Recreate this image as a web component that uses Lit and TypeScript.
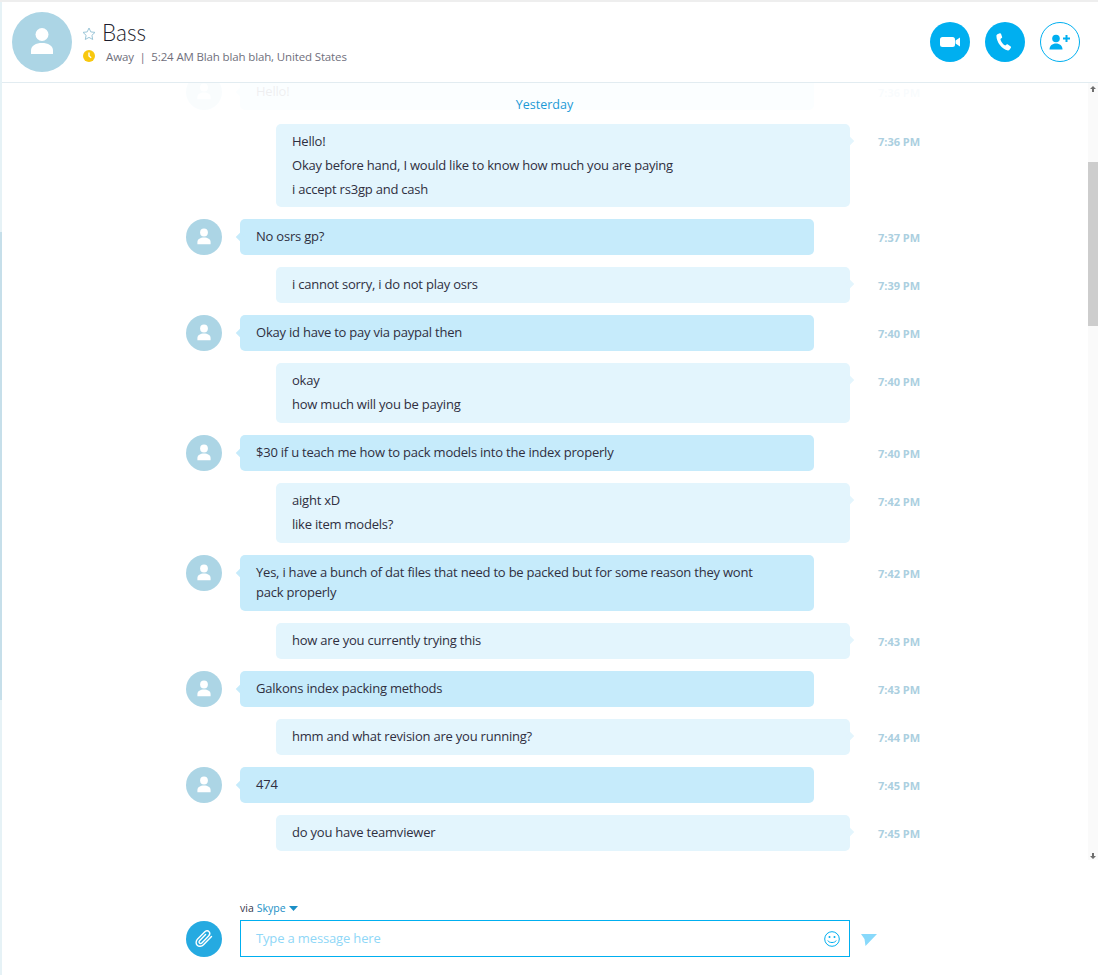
import { LitElement, html, css, svg } from "lit";
import { customElement } from "lit/decorators.js";

type Msg = { me: boolean; lines: string[]; time: string; cls?: string };

const MSGS: Msg[] = [
  { me: false, lines: ["Hello!"], time: "7:36 PM", cls: "faded" },
  { me: true, lines: ["Hello!", "Okay before hand, I would like to know how much you are paying", "i accept rs3gp and cash"], time: "7:36 PM", cls: "trim" },
  { me: false, lines: ["No osrs gp?"], time: "7:37 PM" },
  { me: true, lines: ["i cannot sorry, i do not play osrs"], time: "7:39 PM" },
  { me: false, lines: ["Okay id have to pay via paypal then"], time: "7:40 PM" },
  { me: true, lines: ["okay", "how much will you be paying"], time: "7:40 PM" },
  { me: false, lines: ["$30 if u teach me how to pack models into the index properly"], time: "7:40 PM" },
  { me: true, lines: ["aight xD", "like item models?"], time: "7:42 PM" },
  { me: false, lines: ["Yes, i have a bunch of dat files that need to be packed but for some reason they wont pack properly"], time: "7:42 PM", cls: "wrap" },
  { me: true, lines: ["how are you currently trying this"], time: "7:43 PM" },
  { me: false, lines: ["Galkons index packing methods"], time: "7:43 PM" },
  { me: true, lines: ["hmm and what revision are you running?"], time: "7:44 PM" },
  { me: false, lines: ["474"], time: "7:45 PM" },
  { me: true, lines: ["do you have teamviewer"], time: "7:45 PM" },
];

const person = svg`<circle cx="30" cy="22.5" r="6.5" fill="#fff"/><path d="M19 41.5v-3.2c0-4.6 5-7.3 11-7.3s11 2.7 11 7.3v3.2q0 .5-.5.5h-21q-.5 0-.5-.5z" fill="#fff"/>`;

@customElement("app-root")
export class AppRoot extends LitElement {
  static styles = css`
    :host {
      display: flex;
      flex-direction: column;
      height: 975px;
      width: 1098px;
      overflow: hidden;
      background: #fff;
      font-family: "Open Sans", "Noto Sans", "Liberation Sans", sans-serif;
      font-size: 13px;
      letter-spacing: -0.22px;
      color: #2f2f3f;
      box-sizing: border-box;
      border-top: 2px solid #eeeeee;
      position: relative;
    }
    .edge {
      position: absolute;
      left: 0;
      top: 0;
      bottom: 0;
      width: 2px;
      z-index: 2;
      background: linear-gradient(#e6f2f6 0 230px, #c6dfea 230px 698px, #e6f2f6 698px);
    }
    header {
      height: 80px;
      flex: none;
      display: flex;
      align-items: center;
      padding: 0 18px 0 12px;
      border-bottom: 1px solid #e2ecf1;
    }
    .bigav { width: 60px; height: 60px; border-radius: 50%; background: #acd5e5; flex: none; }
    .bigav svg { display: block; }
    .who { margin-left: 10px; flex: 1; align-self: flex-start; display: flex; flex-direction: column; padding-top: 17px; }
    .nameline { display: flex; align-items: center; gap: 6px; height: 28px; }
    .nameline svg { margin-top: 2px; }
    .name {
      font-family: "Lato", "Open Sans", sans-serif;
      font-weight: 300;
      font-size: 22.5px;
      line-height: 28px;
      color: #1c1c2c;
      letter-spacing: 0;
    }
    .statusline { display: flex; align-items: center; height: 18px; font-size: 11.5px; letter-spacing: -0.14px; color: #6f6f7c; }
    .statusline svg { margin-left: 1px; margin-right: 11px; }
    .actions { display: flex; gap: 15px; }
    .btn { width: 40px; height: 40px; border-radius: 50%; background: #00aff0; display: flex; }
    .btn.outline { background: #fff; box-sizing: border-box; border: 1.5px solid #00aff0; }
    .btn svg { margin: auto; display: block; }
    .chat { height: 777px; flex: none; display: flex; position: relative; overflow: hidden; }
    .scroll { flex: 1; overflow: hidden; min-width: 0; }
    .list { display: flex; flex-direction: column; gap: 12px; margin-top: -9px; padding-left: 186px; }
    .fade {
      position: absolute;
      left: 0;
      right: 10px;
      top: 0;
      height: 30px;
      background: rgba(255, 255, 255, 0.92);
    }
    .day {
      position: absolute;
      left: 1px;
      right: 10px;
      top: 13px;
      text-align: center;
      font-size: 12.5px;
      letter-spacing: 0;
      line-height: 18px;
      color: #1b9ad6;
    }
    .row { display: flex; align-items: flex-start; }
    .faded { margin-bottom: 2px; }
    .av { width: 36px; height: 36px; border-radius: 50%; background: #acd5e5; flex: none; margin-right: 18px; }
    .av svg { display: block; }
    .bubble {
      width: 574px;
      flex: none;
      box-sizing: border-box;
      padding: 6px 40px 6px 16px;
      border-radius: 5px;
      position: relative;
      background: #c6ebfb;
    }
    .bubble::after {
      content: "";
      position: absolute;
      top: 15px;
      width: 6px;
      height: 6px;
      transform: rotate(45deg);
      background: inherit;
    }
    .row.them .bubble::after { left: -3px; }
    .row.me { padding-left: 90px; }
    .row.me .bubble { background: #e3f5fd; }
    .row.me .bubble::after { right: -3px; top: 14px; }
    .row.trim .bubble { padding-bottom: 5px; }
    .bubble p { margin: 0; padding: 1px 0 3px; line-height: 20px; }
    .time {
      flex: none;
      margin-top: 11px;
      font-size: 11px;
      letter-spacing: 0;
      line-height: 16px;
      font-weight: 700;
      color: #abcfe0;
    }
    .row.trim .time { margin-top: 10px; }
    .row.me .time { margin-left: 28px; }
    .row.them .time { margin-left: 64px; }
    .bar { width: 10px; flex: none; background: #fafafa; position: relative; }
    .thumb { position: absolute; left: 0; right: 0; top: 79px; height: 164px; background: #cdcdcd; }
    .arrow { position: absolute; left: 2px; display: block; }
    .arrow.up { top: 3px; }
    .arrow.down { bottom: 1px; }
    footer { flex: 1; display: flex; flex-direction: column; padding: 41px 0 0 186px; }
    .via { margin-left: 54px; font-size: 10.5px; letter-spacing: 0; line-height: 14px; color: #35354a; display: flex; align-items: center; gap: 3px; height: 14px; }
    .via b { font-weight: 400; color: #1b8fc6; }
    .entry { display: flex; align-items: flex-end; margin-top: 5px; }
    .clip { width: 36px; height: 36px; border-radius: 50%; background: #25aae1; flex: none; margin-right: 18px; display: flex; }
    .clip svg { margin: auto; display: block; }
    .input {
      width: 610px;
      height: 37px;
      box-sizing: border-box;
      border: 1px solid #00aff0;
      display: flex;
      align-items: center;
      padding: 0 9px 0 15px;
    }
    .ph { flex: 1; color: #8fd7f7; font-size: 13px; letter-spacing: -0.15px; margin-top: -2px; }
    .send { margin: 0 0 11px 11px; display: block; }
  `;

  render() {
    return html`
      <div class="edge"></div>
      <header>
        <div class="bigav"><svg width="60" height="60" viewBox="0 0 60 60">${person}</svg></div>
        <div class="who">
          <div class="nameline">
            <svg width="14" height="14" viewBox="0 0 14 14"><path d="M7 1l1.800 3.900 4.200.5-3.100 2.900.8 4.200L7 10.400 3.300 12.500l.8-4.200L1 5.400l4.200-.5z" fill="none" stroke="#9cc6d8" stroke-width="1"/></svg>
            <span class="name">Bass</span>
          </div>
          <div class="statusline">
            <svg width="12" height="12" viewBox="0 0 12 12"><circle cx="6" cy="6" r="6" fill="#f8c80e"/><path d="M6 2.500V6l2.200 1.700" fill="none" stroke="#fff" stroke-width="1.400"/></svg>
            <span>Away &nbsp;|&nbsp; 5:24 AM Blah blah blah, United States</span>
          </div>
        </div>
        <div class="actions">
          <div class="btn"><svg width="20" height="10" viewBox="0 0 20 10"><rect x="0" y="0" width="15" height="10" rx="2.500" fill="#fff"/><path d="M15.500 3.500L20 .5v9l-4.500-3z" fill="#fff"/></svg></div>
          <div class="btn"><svg width="18" height="18" viewBox="0 0 18 18"><path d="M1.400 1.200L3.800.3c.5-.2 1 .1 1.200.5l1.100 3.100c.2.500 0 1-.4 1.200L4.400 5.900c.3 2.400 2.600 5.600 4.800 6.700l1.400-1.100c.4-.3.9-.3 1.300 0l2.800 2c.4.300.5.900.2 1.300l-1.400 1.900c-.4.500-1 .8-1.600.7C5.800 16.500.5 9.200.4 2.800c0-.7.300-1.300 1-1.600z" fill="#fff"/></svg></div>
          <div class="btn outline"><svg width="22" height="16" viewBox="0 0 22 16"><circle cx="7" cy="4.500" r="3.800" fill="#00aff0"/><path d="M.5 15.500c0-3.800 2.800-6 6.500-6s6.500 2.200 6.500 6z" fill="#00aff0"/><path d="M17.500 1v7M14 4.500h7" stroke="#00aff0" stroke-width="2" fill="none"/></svg></div>
        </div>
      </header>
      <div class="chat">
        <div class="scroll">
          <div class="list">
            ${MSGS.map(
              (m) => html`
                <div class="row ${m.me ? "me" : "them"} ${m.cls ?? ""}">
                  ${m.me ? "" : html`<div class="av"><svg width="36" height="36" viewBox="0 0 60 60">${person}</svg></div>`}
                  <div class="bubble">${m.lines.map((l) => html`<p>${l}</p>`)}</div>
                  <div class="time">${m.time}</div>
                </div>
              `
            )}
          </div>
        </div>
        <div class="fade"></div>
        <div class="day">Yesterday</div>
        <div class="bar">
          <svg class="arrow up" width="6" height="6" viewBox="0 0 6 6"><path d="M3 0l3 3H4v3H2V3H0z" fill="#6e6e6e"/></svg>
          <div class="thumb"></div>
          <svg class="arrow down" width="6" height="6" viewBox="0 0 6 6"><path d="M3 6L0 3h2V0h2v3h2z" fill="#6e6e6e"/></svg>
        </div>
      </div>
      <footer>
        <div class="via">via <b>Skype</b><svg width="9" height="5" viewBox="0 0 9 5"><path d="M0 0h9L4.500 5z" fill="#1b8fc6"/></svg></div>
        <div class="entry">
          <div class="clip"><svg width="20" height="20" viewBox="0 0 20 20"><path d="M17.500 7.500l-8 8.300c-1.800 1.800-4.700 2-6.300.4s-1.400-4.300.4-6.100l7-7.200c1.300-1.300 3.300-1.500 4.400-.3s.9 3-.4 4.300l-6.800 7c-.7.7-1.800.8-2.400.2s-.5-1.600.2-2.300l6-6.200" fill="none" stroke="#fff" stroke-width="1.400" stroke-linecap="round"/></svg></div>
          <div class="input">
            <span class="ph">Type a message here</span>
            <svg width="16" height="16" viewBox="0 0 16 16"><circle cx="8" cy="8" r="7.300" fill="none" stroke="#00aff0" stroke-width="1"/><circle cx="5.500" cy="6" r="1" fill="#00aff0"/><circle cx="10.500" cy="6" r="1" fill="#00aff0"/><path d="M3.800 9.500c1 2.700 7.400 2.700 8.400 0" fill="none" stroke="#00aff0" stroke-width="1"/></svg>
          </div>
          <svg class="send" width="16" height="12" viewBox="0 0 16 12"><path d="M0 0h16L4.500 12 3.500 5z" fill="#88d9fb"/></svg>
        </div>
      </footer>
    `;
  }
}
